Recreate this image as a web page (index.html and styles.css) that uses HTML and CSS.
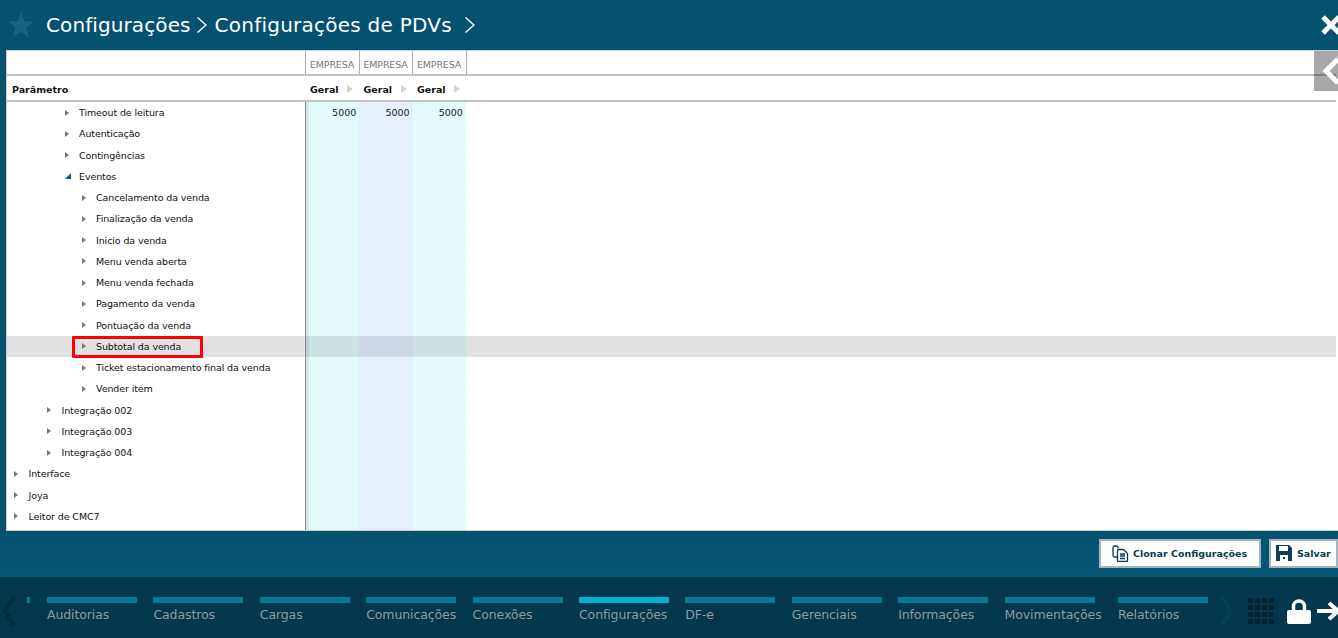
FILE: index.html
```html
<!DOCTYPE html>
<html lang="pt-BR">
<head>
<meta charset="utf-8">
<title>Configurações de PDVs</title>
<link rel="stylesheet" href="styles.css">
</head>
<body>
<header class="top">
  <svg class="star" width="28" height="28" viewBox="0 0 30 30"><path d="M15 1l3.700 10 10.300.4-8.100 6.400 2.800 10.200L15 22.200 6.300 28l2.800-10.200L1 11.400l10.300-.4z"/></svg>
  <h1 class="crumb">Configurações</h1>
  <svg class="sep" width="12" height="18" viewBox="0 0 12 18"><path d="M1.500 1.500L10 9l-8.500 7.500"/></svg>
  <h1 class="crumb crumb-b">Configurações de PDVs</h1>
  <svg class="sep sep-b" width="12" height="18" viewBox="0 0 12 18"><path d="M1.500 1.500L10 9l-8.500 7.500"/></svg>
  <svg class="close" width="18" height="22" viewBox="0 0 18 22"><path d="M2 3l16 16M18 3L2 19"/></svg>
</header>

<main class="panel">
  <button class="collapse" aria-label="Recolher"><svg width="24" height="30" viewBox="0 0 24 30"><path d="M24 3L12 15l12 12"/></svg></button>
  <div class="hrow hrow-a">
    <div class="name"></div>
    <div class="hcol emp">EMPRESA</div><div class="hcol emp">EMPRESA</div><div class="hcol emp">EMPRESA</div>
  </div>
  <div class="hrow hrow-b">
    <div class="name param">Parâmetro</div>
    <div class="hcol geral">Geral<i class="mini"></i></div><div class="hcol geral">Geral<i class="mini"></i></div><div class="hcol geral">Geral<i class="mini"></i></div>
  </div>
  <div class="rows">
    <div class="row"><div class="name l3"><i class="tri"></i>Timeout de leitura</div><div class="v a">5000</div><div class="v b">5000</div><div class="v a">5000</div></div>
    <div class="row"><div class="name l3"><i class="tri"></i>Autenticação</div><div class="v a"></div><div class="v b"></div><div class="v a"></div></div>
    <div class="row"><div class="name l3"><i class="tri"></i>Contingências</div><div class="v a"></div><div class="v b"></div><div class="v a"></div></div>
    <div class="row"><div class="name l3"><i class="tri open"></i>Eventos</div><div class="v a"></div><div class="v b"></div><div class="v a"></div></div>
    <div class="row"><div class="name l4"><i class="tri"></i>Cancelamento da venda</div><div class="v a"></div><div class="v b"></div><div class="v a"></div></div>
    <div class="row"><div class="name l4"><i class="tri"></i>Finalização da venda</div><div class="v a"></div><div class="v b"></div><div class="v a"></div></div>
    <div class="row"><div class="name l4"><i class="tri"></i>Inicio da venda</div><div class="v a"></div><div class="v b"></div><div class="v a"></div></div>
    <div class="row"><div class="name l4"><i class="tri"></i>Menu venda aberta</div><div class="v a"></div><div class="v b"></div><div class="v a"></div></div>
    <div class="row"><div class="name l4"><i class="tri"></i>Menu venda fechada</div><div class="v a"></div><div class="v b"></div><div class="v a"></div></div>
    <div class="row"><div class="name l4"><i class="tri"></i>Pagamento da venda</div><div class="v a"></div><div class="v b"></div><div class="v a"></div></div>
    <div class="row"><div class="name l4"><i class="tri"></i>Pontuação da venda</div><div class="v a"></div><div class="v b"></div><div class="v a"></div></div>
    <div class="row sel"><div class="name l4"><span class="mark"></span><i class="tri"></i>Subtotal da venda</div><div class="v a"></div><div class="v b"></div><div class="v a"></div></div>
    <div class="row"><div class="name l4"><i class="tri"></i>Ticket estacionamento final da venda</div><div class="v a"></div><div class="v b"></div><div class="v a"></div></div>
    <div class="row"><div class="name l4"><i class="tri"></i>Vender item</div><div class="v a"></div><div class="v b"></div><div class="v a"></div></div>
    <div class="row"><div class="name l2"><i class="tri"></i>Integração 002</div><div class="v a"></div><div class="v b"></div><div class="v a"></div></div>
    <div class="row"><div class="name l2"><i class="tri"></i>Integração 003</div><div class="v a"></div><div class="v b"></div><div class="v a"></div></div>
    <div class="row"><div class="name l2"><i class="tri"></i>Integração 004</div><div class="v a"></div><div class="v b"></div><div class="v a"></div></div>
    <div class="row"><div class="name l0"><i class="tri"></i>Interface</div><div class="v a"></div><div class="v b"></div><div class="v a"></div></div>
    <div class="row"><div class="name l0"><i class="tri"></i>Joya</div><div class="v a"></div><div class="v b"></div><div class="v a"></div></div>
    <div class="row"><div class="name l0"><i class="tri"></i>Leitor de CMC7</div><div class="v a"></div><div class="v b"></div><div class="v a"></div></div>
    <div class="row tail"><div class="name"></div><div class="v a"></div><div class="v b"></div><div class="v a"></div></div>
  </div>
</main>

<section class="actions">
  <button class="btn btn-clone">
    <svg width="17" height="17" viewBox="0 0 17 17"><path class="ic" d="M6 3.500V2.500A1.500 1.500 0 0 0 4.500 1h-2A1.500 1.500 0 0 0 1 2.500v8A1.500 1.500 0 0 0 2.500 12H5"/><path class="ic" d="M6.500 4.500h5l4 4v7a1 1 0 0 1-1 1h-8a1 1 0 0 1-1-1v-10a1 1 0 0 1 1-1z"/><path class="ic" d="M8 9h5M8 11h5M8 13.500h5"/></svg>
    Clonar Configurações
  </button>
  <button class="btn btn-save">
    <svg width="16" height="16" viewBox="0 0 16 16"><path class="fill" d="M0 0h13l3 3v13H0zM3 1v5h9V1zM4 10v6h8v-6z"/><rect class="fill" x="7" y="12" width="2" height="2"/></svg>
    Salvar
  </button>
</section>

<nav class="nav">
  <svg class="nav-arrow" width="14" height="30" viewBox="0 0 14 30"><path d="M12 1L3 15l9 14"/></svg>
  <span class="stub"></span>
  <ul class="tabs">
    <li class="tab"><span class="bar"></span>Auditorias</li>
    <li class="tab"><span class="bar"></span>Cadastros</li>
    <li class="tab"><span class="bar"></span>Cargas</li>
    <li class="tab"><span class="bar"></span>Comunicações</li>
    <li class="tab"><span class="bar"></span>Conexões</li>
    <li class="tab on"><span class="bar"></span>Configurações</li>
    <li class="tab"><span class="bar"></span>DF-e</li>
    <li class="tab"><span class="bar"></span>Gerenciais</li>
    <li class="tab"><span class="bar"></span>Informações</li>
    <li class="tab"><span class="bar"></span>Movimentações</li>
    <li class="tab"><span class="bar"></span>Relatórios</li>
  </ul>
  <svg class="nav-arrow next" width="14" height="30" viewBox="0 0 14 30"><path d="M2 1l9 14-9 14"/></svg>
  <div class="apps"><i></i><i></i><i></i><i></i><i></i><i></i><i></i><i></i><i></i><i></i><i></i><i></i><i></i><i></i><i></i><i></i></div>
  <svg class="lock" width="24" height="26" viewBox="0 0 24 26"><path class="lock-s" d="M6.500 12V7.500a5.500 5.500 0 0 1 11 0V12"/><rect class="lock-f" x="0" y="11" width="24" height="14" rx="2"/></svg>
  <svg class="exit" width="24" height="20" viewBox="0 0 24 20"><path d="M0 10h21M12 2l9 8-9 8"/></svg>
</nav>
</body>
</html>
```
FILE: styles.css
```css
* { box-sizing: border-box; }
html, body { margin: 0; height: 638px; overflow: hidden; }
body {
  background: #05526f;
  font-family: "DejaVu Sans", sans-serif;
  display: flex;
  flex-direction: column;
  width: 1338px;
}
.top {
  height: 50px;
  display: flex;
  align-items: center;
  position: relative;
  padding-left: 7px;
  padding-bottom: 1px;
  flex: none;
}
.star { fill: #196380; flex: none; }
.crumb {
  margin: 0 0 0 11px;
  font-size: 20px;
  font-weight: 400;
  color: #fff;
  letter-spacing: .1px;
  white-space: nowrap;
}
.crumb-b { margin-left: 7px; letter-spacing: .24px; }
.sep { fill: none; stroke: #fff; stroke-width: 1.300; margin-left: 5px; flex: none; }
.sep-b { margin-left: 12px; }
.close { position: absolute; right: -1px; top: 14px; fill: none; stroke: #fff; stroke-width: 5; }

.panel {
  height: 481px;
  margin-left: 6px;
  background: #fff;
  position: relative;
  flex: none;
  font-size: 9.500px;
  color: #111;
  padding-right: 2px;
  border-top: 1px solid #c8d2d6;
  border-left: 1px solid #c8d2d6;
  border-bottom: 1px solid #c8d2d6;
  overflow: hidden;
}
.collapse {
  position: absolute;
  top: -1px;
  right: 0;
  width: 24px;
  height: 41px;
  padding: 0;
  border: 0;
  background: rgba(0, 0, 0, .34);
  z-index: 2;
  display: flex;
  align-items: center;
  justify-content: flex-end;
}
.collapse svg { fill: none; stroke: #fff; stroke-width: 5; flex: none; }
.hrow { display: flex; border-bottom: 2px solid #c2c2c2; }
.hrow-a { height: 25px; }
.hrow-b { height: 26px; padding-top: 3px; }
.name {
  width: 299px;
  flex: none;
  display: flex;
  align-items: center;
  position: relative;
  white-space: nowrap;
  border-right: 1px solid #8e8e8e;
  letter-spacing: -.11px;
}
.hrow .name { width: 298px; border-right-width: 0; }
.hcol {
  width: 53.500px;
  flex: none;
  display: flex;
  align-items: center;
  padding-left: 4px;
  white-space: nowrap;
}
.emp {
  color: #757575;
  font-size: 9.500px;
  border-left: 1px solid #b0b0b0;
  letter-spacing: -.17px;
  padding-top: 4px;
}
.emp:last-child { border-right: 1px solid #b0b0b0; width: 54.500px; }
.param { font-weight: 700; padding-left: 5px; color: #111; letter-spacing: 0; }
.geral { font-weight: 700; color: #111; position: relative; padding-left: 5px; }
.mini {
  position: absolute;
  left: 42px;
  top: 6px;
  border-left: 6px solid #d2d2d2;
  border-top: 4.500px solid transparent;
  border-bottom: 4.500px solid transparent;
}
.rows { display: flex; flex-direction: column; }
.row { display: flex; height: 21.250px; flex: none; position: relative; }
.tail { height: 8px; }
.sel { background: #e1e1e1; }
.l0 { padding-left: 7px; }
.l2 { padding-left: 40px; }
.l3 { padding-left: 57.500px; }
.l4 { padding-left: 74.500px; }
.tri {
  flex: none;
  width: 0;
  height: 0;
  border-left: 4px solid #777;
  border-top: 3.500px solid transparent;
  border-bottom: 3.500px solid transparent;
  margin-right: 10.500px;
}
.tri.open {
  border-left: 6px solid transparent;
  border-top: 0;
  border-bottom: 6px solid #0b5876;
  margin-right: 8.500px;
}
.mark {
  position: absolute;
  left: 65px;
  top: 0;
  width: 131px;
  height: 22px;
  border: 3px solid #f00;
  border-radius: 1px;
}
.v {
  width: 53.300px;
  flex: none;
  text-align: right;
  padding: 4px 3px 0 0;
  font-size: 9.500px;
  line-height: 13px;
  color: #222;
  box-shadow: inset 0 -1px 0 rgba(255, 255, 255, .25);
}
.a { background: #e3fbfb; }
.b { background: #e5f0fb; }
.row .v:nth-child(2) { box-shadow: inset 3px 0 0 #d6e8e8, inset 0 -1px 0 rgba(255, 255, 255, .25); }
.sel .a { background: #cde0e2; }
.sel .b { background: #cdd8e4; }
.sel .v:nth-child(2) { box-shadow: inset 3px 0 0 #bfcfd1; }

.actions {
  height: 46px;
  flex: none;
  display: flex;
  align-items: center;
  justify-content: flex-end;
  gap: 8px;
  background: linear-gradient(#05526f, #065674);
  padding-bottom: 2px;
}
.btn {
  height: 29px;
  background: #fff;
  border: 2px solid #9fb7c2;
  padding: 0 0 0 11px;
  display: flex;
  align-items: center;
  gap: 4px;
  font: 700 9.500px "DejaVu Sans", sans-serif;
  color: #0a3a4e;
  white-space: nowrap;
}
.btn-clone { width: 162px; }
.btn-save { width: 69px; padding-left: 5px; gap: 5px; }
.ic { fill: none; stroke: #0a3a4e; stroke-width: 1.300; }
.fill { fill: #0a3f57; fill-rule: evenodd; }

.nav {
  height: 61px;
  flex: none;
  background: #03374d;
  position: relative;
  display: flex;
  padding-top: 20px;
  color: #8e9a9f;
}
.nav-arrow { fill: none; stroke: #02293a; stroke-width: 4; position: absolute; left: 2px; top: 19px; }
.nav-arrow.next { left: 1220px; stroke: #053f57; }
.stub { position: absolute; left: 27px; top: 20px; width: 3px; height: 6px; background: #047a93; }
.tabs {
  list-style: none;
  margin: 0 0 0 47px;
  padding: 0;
  display: flex;
  gap: 16.400px;
}
.tab {
  min-width: 90px;
  font-size: 12.500px;
  white-space: nowrap;
  display: flex;
  flex-direction: column;
  gap: 4px;
  line-height: 16px;
  letter-spacing: -.1px;
}
.bar { display: block; width: 90px; height: 6px; background: #047a93; }
.on .bar { background: #00afd2; }
.apps {
  position: absolute;
  left: 1248px;
  top: 21px;
  display: grid;
  grid-template-columns: repeat(4, 5px);
  grid-auto-rows: 5px;
  gap: 2px;
}
.apps i { background: #02202d; }
.lock { position: absolute; left: 1287px; top: 22px; }
.lock-s { fill: none; stroke: #fff; stroke-width: 3.500; }
.lock-f { fill: #fff; }
.exit { position: absolute; left: 1317px; top: 24px; fill: none; stroke: #fff; stroke-width: 4; }
```
